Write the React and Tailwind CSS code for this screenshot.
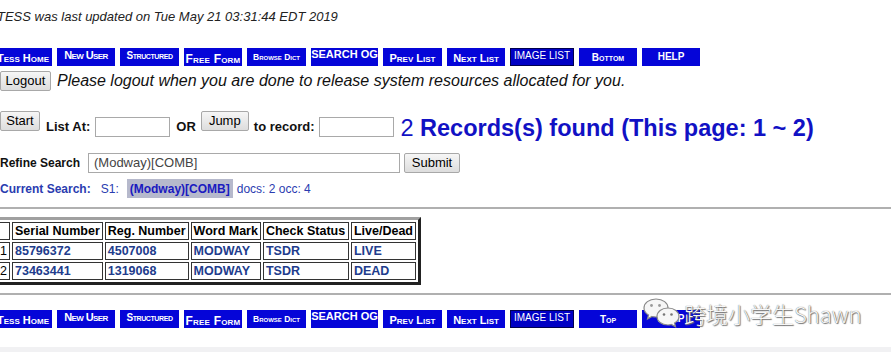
import React from 'react'

const navButtons = [
  { label: 'Tess Home', width: 'w-[58px]', text: 'text-[11px] [font-variant:small-caps] items-end pb-[2px]' },
  { label: 'New User', width: 'w-[58px]', text: 'text-[11px] [font-variant:small-caps] items-start pt-[2px] tracking-[-0.6px]' },
  { label: 'Structured', width: 'w-[59px]', text: 'text-[10px] [font-variant:small-caps] items-start pt-[3px] tracking-[-0.4px]' },
  { label: 'Free Form', width: 'w-[58px]', text: 'text-[12px] [font-variant:small-caps] items-end pb-[1px] tracking-[0.2px]' },
  { label: 'Browse Dict', width: 'w-[59px]', text: 'text-[8.5px] [font-variant:small-caps] items-center pt-[1px]' },
  { label: 'SEARCH OG', width: 'w-[67px]', text: 'text-[11px] items-start pt-[1px]' },
  { label: 'Prev List', width: 'w-[59px]', text: 'text-[11px] [font-variant:small-caps] items-end pb-[2px] text-[#8c8cf4]' },
  { label: 'Next List', width: 'w-[58px]', text: 'text-[11px] [font-variant:small-caps] items-end pb-[2px] text-[#8c8cf4]' },
  { label: 'IMAGE LIST', width: 'w-[64px]', text: 'text-[10px] font-normal items-start pt-[2px]', dark: true },
  { label: 'Bottom', width: 'w-[58px]', text: 'text-[10px] [font-variant:small-caps] items-center pt-[2px]' },
  { label: 'HELP', width: 'w-[58px]', text: 'text-[10px] items-center' },
]

const rows = [
  { n: 1, serial: '85796372', reg: '4507008', mark: 'MODWAY', check: 'TSDR', status: 'LIVE' },
  { n: 2, serial: '73463441', reg: '1319068', mark: 'MODWAY', check: 'TSDR', status: 'DEAD' },
]

const NavBar = ({ bottomLabel }) => (
  <div className="flex gap-[5px] ml-[-6px] h-[18px]">
    {navButtons.map((button) => (
      <div
        key={button.label}
        className={`${button.width} h-[18px] shrink-0 flex justify-center font-bold leading-none whitespace-nowrap overflow-hidden text-white ${
          button.dark ? 'bg-[#0000c4] border border-[#000050]' : 'bg-[#0505d8]'
        } ${button.text}`}
      >
        {button.label === 'Bottom' ? bottomLabel : button.label}
      </div>
    ))}
  </div>
)

const GrayButton = ({ children, className = '' }) => (
  <div
    className={`h-[20px] shrink-0 flex items-center justify-center text-[13px] font-normal text-black bg-gradient-to-b from-[#f6f6f6] to-[#dddddd] border border-[#a8a8a8] rounded-[2px] ${className}`}
  >
    {children}
  </div>
)

const TextBox = ({ className = '', children }) => (
  <div
    className={`h-[20px] shrink-0 bg-white border border-[#a9a9a9] flex items-center text-[13px] font-normal text-[#444] pl-[5px] ${className}`}
  >
    {children}
  </div>
)

const WeChatIcon = () => (
  <svg width="40" height="32" viewBox="0 0 40 32">
    <g stroke="#8a8a8a" strokeWidth="1.2" fill="#f6f6f6">
      <path d="M13 2 C6 2 1 6 1 11 C1 14 3 16.5 5.5 18 L4.5 22 L9 19.5 C10.3 19.8 11.6 20 13 20 C20 20 25 16 25 11 C25 6 20 2 13 2 Z" />
      <path d="M25 11 C18.5 11 14 14.8 14 19.5 C14 24.2 18.5 28 25 28 C26.2 28 27.4 27.8 28.4 27.5 L32.5 29.8 L31.6 26 C34 24.5 36 22.2 36 19.5 C36 14.8 31.5 11 25 11 Z" />
    </g>
    <circle cx="8.5" cy="8.5" r="1.4" fill="#9a9a9a" />
    <circle cx="16.5" cy="8.5" r="1.4" fill="#9a9a9a" />
    <circle cx="21" cy="17.5" r="1.3" fill="#777" />
    <circle cx="28.5" cy="17.5" r="1.3" fill="#777" />
  </svg>
)

const cell = 'h-[18px] border border-[#333] px-[2px] py-0 text-left whitespace-nowrap'

const App = () => {
  return (
    <div className="relative w-[891px] h-[352px] overflow-hidden bg-white font-['Liberation_Sans',Arial,sans-serif]">
      <div className="pt-[9px] ml-[-3px] h-[48px] text-[13px] leading-[16px] italic text-[#222] whitespace-nowrap">
        TESS was last updated on Tue May 21 03:31:44 EDT 2019
      </div>

      <NavBar bottomLabel="Bottom" />

      <div className="flex items-center gap-[6px] mt-[5px] h-[20px]">
        <GrayButton className="w-[51px]">Logout</GrayButton>
        <span className="text-[16px] italic text-[#111] leading-none whitespace-nowrap">
          Please logout when you are done to release system resources allocated for you.
        </span>
      </div>

      <div className="flex items-start gap-[5px] mt-[20px] h-[27px] text-[13px] font-bold text-[#111] whitespace-nowrap">
        <GrayButton className="w-[40px]">Start</GrayButton>
        <span className="mt-[8px] leading-[16px] ml-[1px]">List At:</span>
        <TextBox className="w-[75px] mt-[6px]" />
        <span className="mt-[8px] leading-[16px] ml-[1px]">OR</span>
        <GrayButton className="w-[48px]">Jump</GrayButton>
        <span className="mt-[8px] leading-[16px]">to record:</span>
        <TextBox className="w-[75px] mt-[6px]" />
        <span className="mt-[3px] ml-[1px] text-[23.5px] leading-[28px] text-[#1111c4]">
          <span className="font-normal">2 </span>Records(s) found (This page: 1 ~ 2)
        </span>
      </div>

      <div className="flex items-center gap-[5px] mt-[15px] h-[20px] text-[12px] font-bold text-[#111]">
        <span className="w-[83px] whitespace-nowrap">Refine Search</span>
        <TextBox className="w-[312px]">(Modway)[COMB]</TextBox>
        <GrayButton className="w-[56px] ml-[-1px]">Submit</GrayButton>
      </div>

      <div className="flex items-center mt-[6px] h-[19px] text-[12px] text-[#2a3cb0] whitespace-nowrap">
        <span className="font-bold">Current Search:</span>
        <span className="ml-[10px]">S1:</span>
        <span className="ml-[8px] h-[19px] px-[3px] flex items-center bg-[#b6b9cc] font-bold text-[#1a1ac0]">
          (Modway)[COMB]
        </span>
        <span className="ml-[4px]">docs: 2 occ: 4</span>
      </div>

      <div className="mt-[9px] h-[2px] bg-[#b0b0b0]" />

      <table className="mt-[8px] ml-[-9px] w-fit border-separate border-spacing-[2px] border-[3px] border-t-[#a0a0a0] border-l-[#a0a0a0] border-r-[#222] border-b-[#222] text-[12.5px] leading-[15px] font-bold">
        <thead>
          <tr className="text-black">
            <th className="w-[14px] h-[18px] border border-[#333] p-0" />
            <th className={`w-[90px] ${cell}`}>Serial Number</th>
            <th className={`w-[83px] ${cell}`}>Reg. Number</th>
            <th className={`w-[70px] ${cell}`}>Word Mark</th>
            <th className={`w-[86px] ${cell}`}>Check Status</th>
            <th className={`w-[64px] ${cell}`}>Live/Dead</th>
          </tr>
        </thead>
        <tbody>
          {rows.map((row) => (
            <tr key={row.n} className="text-[#213c8c]">
              <td className="h-[18px] border border-[#333] pr-[2px] py-0 text-right text-black font-normal">{row.n}</td>
              <td className={cell}>{row.serial}</td>
              <td className={cell}>{row.reg}</td>
              <td className={cell}>{row.mark}</td>
              <td className={cell}>{row.check}</td>
              <td className={cell}>{row.status}</td>
            </tr>
          ))}
        </tbody>
      </table>

      <div className="mt-[8px] h-[2px] bg-[#b0b0b0]" />

      <div className="mt-[15px]">
        <NavBar bottomLabel="Top" />
      </div>

      <div className="mt-[19px] h-[10px] bg-[#f1f1f3]" />

      <div className="absolute left-[643px] top-[297px] flex items-center gap-[1px]">
        <WeChatIcon />
        <span className="text-[22px] leading-none font-light text-[#f7f7f7] whitespace-nowrap font-['Noto_Sans_CJK_SC','Noto_Sans',sans-serif] [text-shadow:0_0_1px_#555,1px_1px_1px_#777]">
          跨境小学生Shawn
        </span>
      </div>
    </div>
  )
}

export default App
